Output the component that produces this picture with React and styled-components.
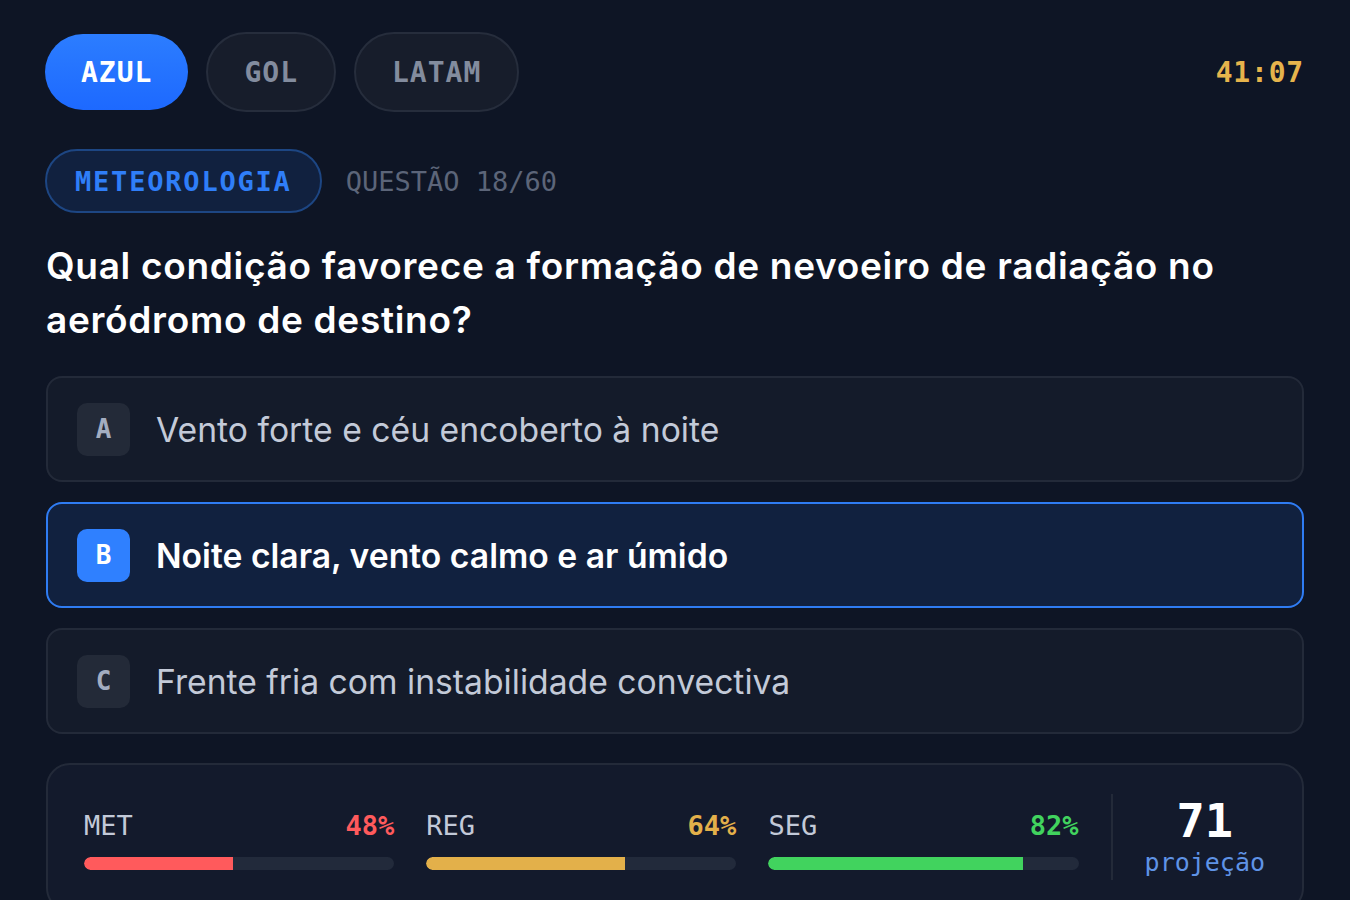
import React from "react";
import styled, { createGlobalStyle } from "styled-components";

const Global = createGlobalStyle`
  html, body { margin: 0; padding: 0; background: #0e1525; }
  body { font-family: Inter, "Noto Sans", sans-serif; color: #fff; }
  * { box-sizing: border-box; }
`;

const MONO = `"DejaVu Sans Mono", "Liberation Mono", monospace`;

const Page = styled.div`
  width: 1350px;
  height: 900px;
  overflow: hidden;
  background: #0e1525;
  padding: 32px 46px 0 45px;
  display: flex;
  flex-direction: column;
`;

const Header = styled.div`
  display: flex;
  align-items: center;
  justify-content: space-between;
  height: 80px;
`;

const Chips = styled.div`
  display: flex;
  align-items: center;
  gap: 18px;
`;

const Chip = styled.button`
  font-family: ${MONO};
  font-weight: 700;
  font-size: 28px;
  letter-spacing: 1px;
  height: ${(p) => (p.$active ? "76px" : "80px")};
  padding: 0 36px;
  border-radius: 40px;
  border: ${(p) => (p.$active ? "none" : "2px solid #262d3c")};
  background: ${(p) =>
    p.$active ? "linear-gradient(180deg, #2c7dff 0%, #1d69ff 100%)" : "#171d2b"};
  color: ${(p) => (p.$active ? "#ffffff" : "#838c9e")};
  display: flex;
  align-items: center;
  justify-content: center;
  cursor: pointer;
`;

const Timer = styled.div`
  font-family: ${MONO};
  font-weight: 700;
  font-size: 28px;
  letter-spacing: 0.8px;
  color: #e6b44c;
`;

const TagRow = styled.div`
  margin-top: 37px;
  display: flex;
  align-items: center;
  gap: 24px;
`;

const Tag = styled.div`
  height: 64px;
  padding: 0 28px;
  border-radius: 32px;
  background: #11213f;
  border: 2px solid #1d4683;
  color: #2f7ef8;
  font-family: ${MONO};
  font-weight: 700;
  font-size: 27px;
  letter-spacing: 1.8px;
  display: flex;
  align-items: center;
`;

const Counter = styled.div`
  font-family: ${MONO};
  font-size: 27px;
  letter-spacing: 0px;
  color: #5c6579;
`;

const Question = styled.h1`
  margin: 26px 0 0 1px;
  font-family: Inter, sans-serif;
  font-weight: 600;
  font-size: 37px;
  line-height: 54px;
  color: #ffffff;
  letter-spacing: 0.7px;
`;

const Options = styled.div`
  margin-top: 29px;
  display: flex;
  flex-direction: column;
  gap: 20px;
`;

const Option = styled.div`
  height: 106px;
  border-radius: 16px;
  border: 2px solid ${(p) => (p.$selected ? "#2f7cf3" : "#232a39")};
  background: ${(p) => (p.$selected ? "#11213f" : "#141b2a")};
  display: flex;
  align-items: center;
  gap: 26px;
  padding: 0 29px;
  margin-left: 1px;
`;

const Letter = styled.div`
  width: 53px;
  height: 53px;
  border-radius: 10px;
  background: ${(p) => (p.$selected ? "#2f80ff" : "#232a38")};
  color: ${(p) => (p.$selected ? "#ffffff" : "#a3adc0")};
  font-family: ${MONO};
  font-weight: 700;
  font-size: 26px;
  display: flex;
  align-items: center;
  justify-content: center;
  flex-shrink: 0;
`;

const OptionText = styled.div`
  font-family: Inter, sans-serif;
  font-size: 33.7px;
  font-weight: ${(p) => (p.$selected ? 600 : 400)};
  color: ${(p) => (p.$selected ? "#ffffff" : "#c3cad8")};
`;

const StatsCard = styled.div`
  margin-top: 29px;
  margin-left: 1px;
  border-radius: 24px;
  border: 2px solid #232a39;
  background: #131a2c;
  padding: 29px 37px 30px 36px;
  display: grid;
  grid-template-columns: 1fr 1fr 1fr auto auto;
  column-gap: 32px;
  height: 160px;
  align-items: start;
`;

const Stat = styled.div`
  display: flex;
  flex-direction: column;
  padding-top: 15px;
`;

const StatHead = styled.div`
  display: flex;
  justify-content: space-between;
  align-items: baseline;
  font-family: ${MONO};
  font-size: 27px;
  line-height: 34px;
`;

const StatLabel = styled.span`
  color: #c2c9d8;
  font-weight: 400;
`;

const StatValue = styled.span`
  color: ${(p) => p.$color};
  font-weight: 700;
`;

const Track = styled.div`
  margin-top: 14px;
  height: 13px;
  border-radius: 7px;
  background: #222a3b;
  overflow: hidden;
`;

const Fill = styled.div`
  height: 100%;
  background: ${(p) => p.$color};
  border-radius: 7px 0 0 7px;
`;

const Divider = styled.div`
  width: 2px;
  height: 86px;
  background: #232a39;
`;

const Projection = styled.div`
  display: flex;
  flex-direction: column;
  align-items: center;
  padding-top: 1px;
`;

const Score = styled.div`
  font-family: ${MONO};
  font-weight: 700;
  font-size: 47px;
  line-height: 52px;
  color: #ffffff;
`;

const ProjLabel = styled.div`
  font-family: ${MONO};
  font-size: 25px;
  line-height: 32px;
  color: #5f93e6;
`;

const stats = [
  { label: "MET", value: 48, color: "#ff5a5c" },
  { label: "REG", value: 64, color: "#e3b04a" },
  { label: "SEG", value: 82, color: "#41d35e" },
];

const options = [
  { letter: "A", text: "Vento forte e céu encoberto à noite" },
  { letter: "B", text: "Noite clara, vento calmo e ar úmido", selected: true },
  { letter: "C", text: "Frente fria com instabilidade convectiva" },
];

export default function App() {
  return (
    <>
      <Global />
      <Page>
        <Header>
          <Chips>
            <Chip $active>AZUL</Chip>
            <Chip>GOL</Chip>
            <Chip>LATAM</Chip>
          </Chips>
          <Timer>41:07</Timer>
        </Header>
        <TagRow>
          <Tag>METEOROLOGIA</Tag>
          <Counter>QUESTÃO 18/60</Counter>
        </TagRow>
        <Question>
          Qual condição favorece a formação de nevoeiro de radiação no aeródromo de destino?
        </Question>
        <Options>
          {options.map((o) => (
            <Option key={o.letter} $selected={o.selected}>
              <Letter $selected={o.selected}>{o.letter}</Letter>
              <OptionText $selected={o.selected}>{o.text}</OptionText>
            </Option>
          ))}
        </Options>
        <StatsCard>
          {stats.map((s) => (
            <Stat key={s.label}>
              <StatHead>
                <StatLabel>{s.label}</StatLabel>
                <StatValue $color={s.color}>{s.value}%</StatValue>
              </StatHead>
              <Track>
                <Fill $color={s.color} style={{ width: `${s.value}%` }} />
              </Track>
            </Stat>
          ))}
          <Divider />
          <Projection>
            <Score>71</Score>
            <ProjLabel>projeção</ProjLabel>
          </Projection>
        </StatsCard>
      </Page>
    </>
  );
}
